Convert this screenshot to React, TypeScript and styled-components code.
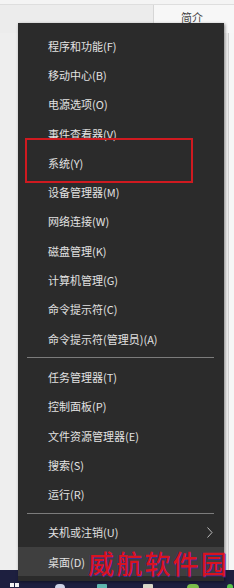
import React from "react";
import styled, { createGlobalStyle } from "styled-components";

const Global = createGlobalStyle`
  html, body { margin: 0; padding: 0; background: #efefef; }
  body { font-family: "Noto Sans CJK SC", "Noto Sans", sans-serif; }
`;

const Screen = styled.div`
  position: relative;
  width: 234px;
  height: 588px;
  overflow: hidden;
  display: flex;
  flex-direction: column;
  background: #eeeeee;
`;

const Window = styled.div`
  flex: 1;
  display: flex;
  flex-direction: column;
  background: #eeeeee;
`;

const TopLine = styled.div`
  height: 4px;
  background: #f4f4f4;
  border-bottom: 1px solid #dedede;
`;

const Header = styled.div`
  display: flex;
  height: 28px;
`;

const HeaderLeft = styled.div`
  width: 153px;
  background: #ececec;
`;

const HeaderRight = styled.div`
  flex: 1;
  background: #f7f7f7;
  border-left: 1px solid #d6d6d6;
  display: flex;
  justify-content: center;
  padding-top: 6px;
  padding-right: 4px;
  font-size: 11px;
  color: #444;
  line-height: 12px;
`;

const RightGutter = styled.div`
  flex: 1;
  display: flex;
  justify-content: flex-end;
`;

const GutterLine = styled.div`
  width: 5px;
  background: #f6f6f6;
  border-left: 1px solid #d0d0d0;
`;

const Taskbar = styled.div`
  height: 18px;
  background: #1d1f3f;
  display: flex;
  align-items: flex-end;
  padding: 0 0 0 10px;
`;

const TaskIcon = styled.div<{ $w: number; $c: string; $ml: number; $round?: boolean }>`
  width: ${(p) => p.$w}px;
  height: 4px;
  margin-left: ${(p) => p.$ml}px;
  background: ${(p) => p.$c};
  border-radius: ${(p) => (p.$round ? "4px 4px 0 0" : "1px 1px 0 0")};
`;

const WinLogo = styled.div`
  width: 9px;
  height: 5px;
  display: grid;
  grid-template-columns: 4px 4px;
  gap: 1px;
  & > span { background: #f2f2f2; height: 4px; }
`;

const Menu = styled.div`
  position: absolute;
  left: 18px;
  top: 23px;
  width: 206px;
  padding: 8px 0 5px;
  background: #2b2b2b;
  box-shadow: 1px 1px 3px rgba(0, 0, 0, 0.45);
  box-sizing: border-box;
`;

const Item = styled.div<{ $active?: boolean }>`
  height: 29.3px;
  display: flex;
  align-items: center;
  justify-content: space-between;
  padding: 0 11px 0 30px;
  font-size: 11px;
  color: #e2e2e2;
  background: ${(p) => (p.$active ? "#3f3f3f" : "transparent")};
  white-space: nowrap;
`;

const Separator = styled.div`
  height: 1px;
  margin: 4px 10px 4px 9px;
  background: #7c7c7c;
`;

const Callout = styled.div`
  position: absolute;
  left: 25px;
  top: 138px;
  width: 168px;
  height: 45px;
  box-sizing: border-box;
  border: 2px solid #cf1a20;
`;

const Watermark = styled.div`
  position: absolute;
  left: 88px;
  top: 548px;
  font-size: 26px;
  font-weight: 500;
  line-height: 30px;
  letter-spacing: 2.2px;
  color: #d8141f;
  text-shadow: 1px 1px 0 rgba(60, 40, 170, 0.75), -1px 0 0 rgba(60, 40, 170, 0.4);
  font-family: "Noto Sans CJK SC", sans-serif;
  white-space: nowrap;
`;

const Chevron = () => (
  <svg width="6" height="11" viewBox="0 0 6 11">
    <polyline points="0.5,0.5 5,5.5 0.5,10.5" fill="none" stroke="#bdbdbd" strokeWidth="1" />
  </svg>
);

type Entry = { label: string; sub?: boolean; active?: boolean } | "sep";

const entries: Entry[] = [
  { label: "程序和功能(F)" },
  { label: "移动中心(B)" },
  { label: "电源选项(O)" },
  { label: "事件查看器(V)" },
  { label: "系统(Y)" },
  { label: "设备管理器(M)" },
  { label: "网络连接(W)" },
  { label: "磁盘管理(K)" },
  { label: "计算机管理(G)" },
  { label: "命令提示符(C)" },
  { label: "命令提示符(管理员)(A)" },
  "sep",
  { label: "任务管理器(T)" },
  { label: "控制面板(P)" },
  { label: "文件资源管理器(E)" },
  { label: "搜索(S)" },
  { label: "运行(R)" },
  "sep",
  { label: "关机或注销(U)", sub: true },
  { label: "桌面(D)", active: true },
];

export default function App() {
  return (
    <>
      <Global />
      <Screen>
        <Window>
          <TopLine />
          <Header>
            <HeaderLeft />
            <HeaderRight>简介</HeaderRight>
          </Header>
          <RightGutter>
            <GutterLine />
          </RightGutter>
        </Window>
        <Taskbar>
          <WinLogo>
            <span />
            <span />
          </WinLogo>
          <TaskIcon $w={10} $c="#cfd3e6" $ml={36} $round />
          <TaskIcon $w={10} $c="#5fb8b0" $ml={32} />
          <TaskIcon $w={10} $c="#d9d9c8" $ml={36} />
          <TaskIcon $w={12} $c="#7cc04a" $ml={34} $round />
          <TaskIcon $w={6} $c="#58c34a" $ml={28} $round />
        </Taskbar>
        <Menu>
          {entries.map((e, i) =>
            e === "sep" ? (
              <Separator key={i} />
            ) : (
              <Item key={i} $active={e.active}>
                <span>{e.label}</span>
                {e.sub && <Chevron />}
              </Item>
            )
          )}
        </Menu>
        <Callout />
        <Watermark>威航软件园</Watermark>
      </Screen>
    </>
  );
}
